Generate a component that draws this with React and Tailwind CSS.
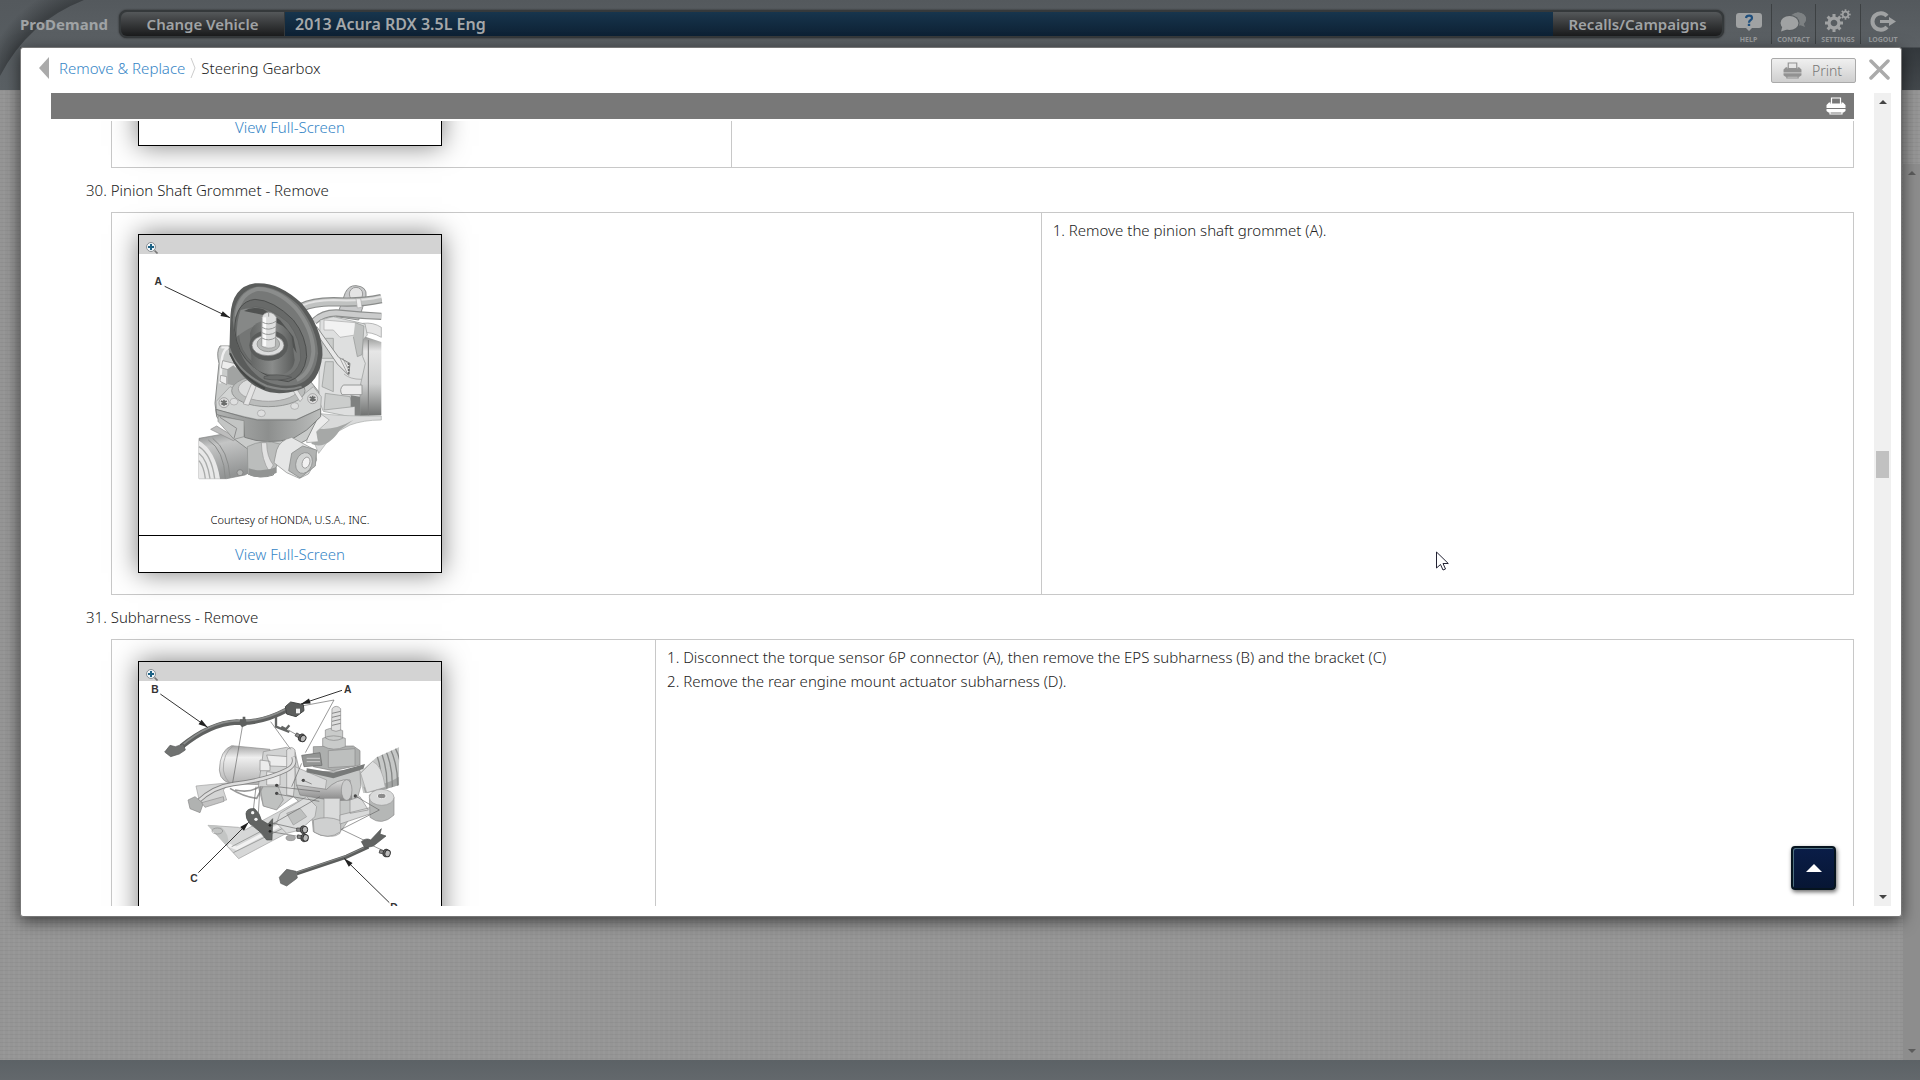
import React from "react";

const steps30 = ["Remove the pinion shaft grommet (A)."];
const steps31 = [
	"Disconnect the torque sensor 6P connector (A), then remove the EPS subharness (B) and the bracket (C)",
	"Remove the rear engine mount actuator subharness (D).",
];

function PrinterIcon({className}) {
	return (
		<svg viewBox="0 0 20 18" className={className} aria-hidden="true">
			<path d="M5.500 1h9v6h-9z" fill="none" stroke="currentColor" strokeWidth="1.200" />
			<path d="M3 5.500h1.600V7h10.800V5.500H17l2.500 2.500v3H.5V8z" fill="currentColor" />
			<path d="M.5 12h19v2L17.500 15.500h-15L.5 14z" fill="currentColor" />
			<path d="M4 14.500h12V17H4z" fill="none" stroke="currentColor" strokeWidth="1.200" />
		</svg>
	);
}

function MagnifierIcon() {
	return (
		<svg viewBox="0 0 12 12" className="size-3" aria-hidden="true">
			<path d="M8.500 8.500L11.500 11.500" stroke="#777" strokeWidth="1.600" />
			<circle cx="5" cy="5" r="4.500" fill="#f2f7fa" stroke="#8b8f92" />
			<path d="M5 2v6M2 5h6" stroke="#1d6285" strokeWidth="2" />
		</svg>
	);
}

function HelpIcon() {
	return (
		<svg viewBox="0 0 26 20" className="h-5 w-[26px]" aria-hidden="true">
			<path d="M3 1h20q3 0 3 3v9q0 3-3 3h-7l-3 3-3-3H3q-3 0-3-3V4q0-3 3-3z" fill="#a0a2a3" />
			<path d="M10 6q.4-2.300 3.200-2.300Q16 3.700 16 6q0 1.300-1.600 2.300-1.400.9-1.400 2.400" fill="none" stroke="#1f4f7d" strokeWidth="2.200" />
			<path d="M11.800 11.800h2.400V14h-2.400z" fill="#1f4f7d" />
		</svg>
	);
}

function ContactIcon() {
	return (
		<svg viewBox="0 0 27 20" className="h-5 w-[27px]" aria-hidden="true">
			<path d="M17 .5c5 0 9 2.700 9 6.500 0 2.200-1 3.700-2.200 4.700L25 15l-4.500-1.800-3.500.3z" fill="#7d8183" />
			<ellipse cx="18" cy="7" rx="8" ry="6.500" fill="#7d8183" />
			<ellipse cx="9.500" cy="11" rx="10" ry="8" fill="#565b5e" />
			<ellipse cx="9.500" cy="11" rx="9" ry="7" fill="#a0a2a3" />
			<path d="M2.500 14L1 19.500 7 17.500z" fill="#a0a2a3" />
		</svg>
	);
}

function Gear({cx, cy, r, width}) {
	const teeth = [0, 45, 90, 135, 180, 225, 270, 315];
	return (
		<g transform={`translate(${cx} ${cy})`} stroke="#a0a2a3" fill="none">
			<circle r={r * 0.55} strokeWidth={width} />
			{teeth.map((angle) => (
				<path key={angle} d={`M0 ${-r * 0.65}V${-r}`} strokeWidth={width * 0.95} transform={`rotate(${angle})`} />
			))}
		</g>
	);
}

function SettingsIcon() {
	return (
		<svg viewBox="0 0 26 23" className="h-[23px] w-[26px]" aria-hidden="true">
			<Gear cx={9} cy={14} r={9} width={3.2} />
			<Gear cx={20.5} cy={5.5} r={5.2} width={1.8} />
		</svg>
	);
}

function LogoutIcon() {
	return (
		<svg viewBox="0 0 26 21" className="h-[21px] w-[26px]" aria-hidden="true">
			<path d="M17 5A8.300 8.300 0 1 0 17 16" fill="none" stroke="#a0a2a3" strokeWidth="4" />
			<path d="M10 9h9V6l7 4.500-7 4.500v-3h-9z" fill="#a0a2a3" />
		</svg>
	);
}

function ToolButton({label, icon, divider}) {
	return (
		<button className={`flex h-10 flex-col items-center justify-end gap-1 ${divider ? "border-l border-[#3d4143]" : ""}`}>
			{icon}
			<span className="text-[7px] leading-[8px] font-bold text-[#999c9e]">{label}</span>
		</button>
	);
}

function TopBar() {
	return (
		<header className="relative flex h-[90px] items-start overflow-hidden bg-[linear-gradient(180deg,#54595d_0px,#5c6165_47px,#34393d_48px,#43484c_90px)]">
			<div className="absolute inset-y-0 left-0 w-5 bg-linear-to-b from-[#54595d] to-[#5a6064]"></div>
			<svg viewBox="0 0 90 90" className="absolute top-0 left-0 h-[90px] w-[90px]" aria-hidden="true">
				<defs>
					<radialGradient id="swoop" gradientUnits="userSpaceOnUse" cx="110" cy="110" r="170">
						<stop offset=".66" stopColor="#33373a" stopOpacity=".75" />
						<stop offset=".78" stopColor="#33373a" stopOpacity="0" />
					</radialGradient>
				</defs>
				<path d="M0 0H84Q28 22 0 76z" fill="url(#swoop)" />
			</svg>
			<div className="relative flex w-full items-start">
				<span className="mt-3 ml-5 w-[99px] text-[15px] leading-6 font-bold text-[#a0a3a5]">ProDemand</span>
				<nav className="mt-[10px] flex h-7 flex-1 overflow-hidden rounded-lg border-2 border-[#35393b] bg-[#35393b] shadow-[0_0_2px_#222]">
					<button className="w-[163px] bg-linear-to-b from-[#55585a] to-[#1b1c1d] text-[15px] leading-[22px] font-semibold text-[#a0a3a5]">Change Vehicle</button>
					<span className="ml-px flex-1 bg-linear-to-b from-[#17354d] to-[#0d2134] pl-[10px] text-[16px] leading-6 font-semibold text-[#a5a8aa]">
						2013 Acura RDX 3.5L Eng
					</span>
					<button className="w-[169px] bg-linear-to-b from-[#55585a] to-[#1b1c1d] text-[15px] leading-[22px] font-semibold text-[#a0a3a5]">
						Recalls/Campaigns
					</button>
				</nav>
				<div className="mt-1 mr-[15px] ml-[2px] grid grid-cols-[45px_44px_45px_45px]">
					<ToolButton label="HELP" icon={<HelpIcon />} />
					<ToolButton label="CONTACT" icon={<ContactIcon />} divider />
					<ToolButton label="SETTINGS" icon={<SettingsIcon />} divider />
					<ToolButton label="LOGOUT" icon={<LogoutIcon />} divider />
				</div>
			</div>
		</header>
	);
}

function Leader({from, to}) {
	const angle = (Math.atan2(to[1] - from[1], to[0] - from[0]) * 180) / Math.PI;
	return (
		<g>
			<path d={`M${from[0]} ${from[1]}L${to[0]} ${to[1]}`} stroke="#333" strokeWidth="3" />
			<path d="M0 0L-28 -8V8z" fill="#222" transform={`translate(${to[0]} ${to[1]}) rotate(${angle})`} />
		</g>
	);
}

function Callout({x, y, children}) {
	return (
		<text x={x} y={y} fontSize="31" fontWeight="700" fill="#333" textAnchor="middle" fontFamily="Liberation Sans, sans-serif">
			{children}
		</text>
	);
}

function GrommetDrawing() {
	return (
		<svg viewBox="57 102 906 843" className="h-[281px] w-[302px]" role="img" aria-label="Pinion shaft grommet">
			<defs>
				<linearGradient id="motor" x1="0" y1="0" x2="0" y2="1">
					<stop offset="0" stopColor="#8d8f8e" />
					<stop offset=".2" stopColor="#e6e6e6" />
					<stop offset=".6" stopColor="#cfd0d0" />
					<stop offset="1" stopColor="#6f7170" />
				</linearGradient>
				<linearGradient id="tube" x1="0" y1="0" x2=".3" y2="1">
					<stop offset="0" stopColor="#8e9090" />
					<stop offset=".3" stopColor="#c4c5c5" />
					<stop offset="1" stopColor="#929494" />
				</linearGradient>
				<linearGradient id="cup" x1="0" y1="0" x2="1" y2="0">
					<stop offset="0" stopColor="#636564" />
					<stop offset=".5" stopColor="#8a8c8b" />
					<stop offset="1" stopColor="#5a5c5b" />
				</linearGradient>
				<linearGradient id="flange" x1="0" y1="0" x2="1" y2="0">
					<stop offset="0" stopColor="#b1b3b2" />
					<stop offset=".5" stopColor="#8d8f8e" />
					<stop offset="1" stopColor="#bcbebd" />
				</linearGradient>
			</defs>

			{/* pipes and bracket behind the housing */}
			<path d="M650 290L676 218Q686 196 708 197Q742 200 738 228L728 262L716 300z" fill="#c9cacb" stroke="#8c8e8d" strokeWidth="3" />
			<circle cx="708" cy="222" r="20" fill="#e4e4e4" stroke="#999" strokeWidth="3" />
			<path d="M545 262Q575 246 640 245Q720 250 784 236" fill="none" stroke="#8a8c8b" strokeWidth="28" />
			<path d="M545 262Q575 246 640 245Q720 250 784 236" fill="none" stroke="#c0c2c1" strokeWidth="21" />
			<path d="M548 256Q580 241 640 240Q720 245 784 230" fill="none" stroke="#e2e2e2" strokeWidth="6" />
			<path d="M582 304Q610 278 650 279Q720 286 784 289" fill="none" stroke="#8c8e8d" strokeWidth="22" />
			<path d="M582 304Q610 278 650 279Q720 286 784 289" fill="none" stroke="#cbcccc" strokeWidth="15" />
			<path d="M708 236L722 236L726 262L712 264z" fill="#eee" stroke="#aaa" strokeWidth="2" />

			{/* motor */}
			<path d="M720 345L784 366V586L720 588z" fill="url(#motor)" />
			<path d="M745 360V586" stroke="#7c7e7d" strokeWidth="3" />
			<path d="M728 310Q760 306 784 322V352Q755 335 728 338z" fill="#e6e6e6" stroke="#9a9c9b" strokeWidth="2" />
			<path d="M600 300L640 290L735 312L742 345L728 360V410L736 430L720 500V586L700 592L610 574L596 540z" fill="#dedfdf" stroke="#939594" strokeWidth="2" />
			<path d="M612 300L706 308V345L660 352L640 330H612z" fill="#f2f2f2" stroke="#aaa" strokeWidth="2" />
			<path d="M706 308L732 318L726 404L712 410L700 350" fill="#bfc1c0" stroke="#939594" strokeWidth="2" />
			<path d="M606 355H640V415H606zM616 425H640V515L606 500zM616 520L690 530L700 560L612 570z" fill="#cbcdcc" stroke="#939594" strokeWidth="2" />
			<path d="M670 495H726V524H666Q656 508 670 495z" fill="#ebebeb" stroke="#989a99" strokeWidth="3" />
			<path d="M692 526L720 530V592L704 590V560H692z" fill="#7f8180" />
			<path d="M590 320L656 412L690 430L686 466L652 432L588 338z" fill="#e8e8e8" stroke="#8c8e8d" strokeWidth="3" />
			<path d="M660 415L684 464M668 414L688 454M676 422L690 438" stroke="#888" strokeWidth="2" />
			<path d="M686 430V464" stroke="#555" strokeWidth="5" strokeDasharray="4 5" />
			<path d="M672 462Q690 478 724 478" fill="none" stroke="#999" strokeWidth="2" />

			{/* lower brackets */}
			<path d="M590 580Q680 590 784 588V600Q730 600 690 615L640 642L596 700L575 650z" fill="#d9dada" stroke="#a8aaa9" strokeWidth="2" />
			<path d="M570 620Q630 640 700 600L660 630Q620 690 575 672z" fill="#a6a8a7" />
			<path d="M565 590L600 580L628 600L590 635L595 665L560 668z" fill="#ececec" stroke="#9c9e9d" strokeWidth="2" />

			{/* steering tube */}
			<path d="M237 655L310 642L395 655L410 745L375 765L320 776H237z" fill="url(#tube)" stroke="#858786" strokeWidth="2" />
			<path d="M237 662Q286 690 300 776H237z" fill="#e8e8e8" />
			<path d="M237 680Q275 705 284 776M237 700Q262 720 270 776M237 722Q252 740 256 776" fill="none" stroke="#aaacab" strokeWidth="4" />
			<path d="M265 660Q312 690 316 776M278 655Q325 690 330 772" fill="none" stroke="#8a8c8b" strokeWidth="3" />
			<circle cx="360" cy="758" r="9" fill="#b5b7b6" stroke="#777" strokeWidth="2" />
			<path d="M272 628L290 618L350 655L340 662z" fill="#bdbdbd" stroke="#8a8a8a" strokeWidth="2" />

			{/* pinion housing */}
			<path d="M300 378H400L560 470L596 515L600 580L560 660L480 700L460 765Q420 778 384 762L400 700L340 655L290 590L285 550L297 430Q288 395 300 378z" fill="#c9cbca" stroke="#8a8c8b" strokeWidth="3" />
			<path d="M304 382H325Q304 392 304 440L300 490" fill="none" stroke="#f0f0f0" strokeWidth="7" />
			<path d="M308 422L350 432V455L304 444zM302 466L320 470V494L300 484z" fill="#ededed" stroke="#8c8c8c" strokeWidth="2" />
			<path d="M322 448L340 436L376 470L360 500L322 492z" fill="#a1a3a2" />
			<path d="M288 545L330 500L430 545L520 548L580 500L604 530L602 566L552 588L530 598H410L374 590L290 570z" fill="#d3d5d4" stroke="#979998" strokeWidth="2" />
			<ellipse cx="445" cy="512" rx="110" ry="48" fill="#bbbdbc" stroke="#939594" strokeWidth="3" />
			<ellipse cx="445" cy="506" rx="90" ry="38" fill="#dcdddd" stroke="#a5a5a5" strokeWidth="3" />
			<path d="M395 490L370 552L386 556L408 500zM515 505L540 545L548 535L526 500z" fill="#e4e4e4" stroke="#999" strokeWidth="2" />
			<path d="M288 568L374 592L412 600H528L602 566V590L560 630L520 655Q440 676 374 652L370 604L290 584z" fill="url(#flange)" stroke="#7d7f7e" strokeWidth="3" />
			<path d="M294 588L372 602V650L342 658L294 604z" fill="#c3c5c4" stroke="#868887" strokeWidth="2" />
			<path d="M300 592L350 625L342 655" fill="none" stroke="#8c8c8c" strokeWidth="3" />
			{[[312, 548], [578, 536]].map(([x, y]) => (
				<g key={x}>
					<circle cx={x} cy={y} r="15" fill="#dcdcdc" stroke="#8c8c8c" strokeWidth="2" />
					<path d={`M${x - 9} ${y - 5}L${x + 9} ${y + 5}M${x - 8} ${y + 5}L${x + 8} ${y - 5}M${x} ${y - 9}V${y + 9}`} stroke="#6a6c6b" strokeWidth="5" />
				</g>
			))}
			{[[342, 545], [424, 580], [524, 558]].map(([x, y]) => (
				<ellipse key={x} cx={x} cy={y} rx="12" ry="10" fill="#dedfdf" stroke="#a0a0a0" strokeWidth="2" />
			))}

			{/* lower boss and plug */}
			<path d="M382 680Q430 655 480 672L470 740Q430 780 384 762z" fill="#bbbdbc" stroke="#8d8f8e" strokeWidth="2" />
			<path d="M424 668L440 668Q440 710 460 735L448 755Q425 720 424 668z" fill="#e2e2e2" stroke="#999" strokeWidth="2" />
			<path d="M386 745Q425 758 470 742V758Q425 782 386 764z" fill="#929493" />
			<path d="M470 690Q480 660 515 652L585 690L590 720L565 762L538 775L500 758L462 728z" fill="#e5e6e6" stroke="#868887" strokeWidth="2" />
			<path d="M515 700L548 678L590 690L586 738L540 774L506 752z" fill="#b1b3b2" stroke="#7c7e7d" strokeWidth="2" />
			<ellipse cx="552" cy="729" rx="24" ry="32" fill="#d2d4d3" stroke="#868887" strokeWidth="2" transform="rotate(20 552 729)" />
			<ellipse cx="558" cy="728" rx="11" ry="17" fill="#f2f2f2" stroke="#888" strokeWidth="2" transform="rotate(20 558 728)" />

			{/* grommet */}
			<path d="M331 290Q335 200 405 190Q475 184 545 250Q608 325 607 405Q600 490 535 510Q470 530 425 508Q360 480 328 400z" fill="#5a5c5b" />
			<path d="M338 300Q345 212 410 200Q470 196 535 255Q592 325 594 400Q586 480 530 494Q480 505 430 480Q350 430 338 300z" fill="#767877" />
			<path d="M350 290Q355 222 412 207Q470 206 525 262Q578 325 580 395Q574 460 530 480" fill="none" stroke="#8b8d8c" strokeWidth="12" />
			<path d="M344 330Q345 245 405 238Q460 240 520 300Q560 350 560 410Q552 470 505 485Q450 480 400 440Q350 400 344 330z" fill="#686a69" stroke="#4c4e4d" strokeWidth="3" />
			<path d="M354 335Q352 270 405 260Q450 262 505 308Q545 360 542 420Q530 462 495 470Q445 468 400 430Q358 395 354 335z" fill="#747675" stroke="#636564" strokeWidth="3" />
			<path d="M362 270Q400 255 440 280L425 310Q390 320 350 350Q350 300 362 270z" fill="#868887" />
			<path d="M372 273Q395 258 430 268L480 300L520 350L530 400L500 350L430 285z" fill="#505251" />
			<path d="M390 340Q400 302 445 300Q495 310 515 350L524 420Q520 460 475 465Q420 465 395 435Z" fill="url(#cup)" />
			<ellipse cx="446" cy="376" rx="58" ry="46" fill="#5a5c5b" />
			<ellipse cx="444" cy="376" rx="48" ry="31" fill="#dcdddd" stroke="#777" strokeWidth="2" />
			<ellipse cx="445" cy="372" rx="34" ry="23" fill="#b6b8b7" stroke="#868887" strokeWidth="2" />
			<path d="M426 292Q430 278 446 277Q462 278 469 292L466 380Q445 390 424 378z" fill="#dedfdf" stroke="#8c8c8c" strokeWidth="2" />
			<path d="M434 292V378" stroke="#fafafa" strokeWidth="9" />
			<path d="M426 306Q446 318 468 304M426 322Q446 334 468 320M426 338Q446 350 468 336M426 354Q446 366 468 352M446 278V290" fill="none" stroke="#989a99" strokeWidth="3" />
			<path d="M328 385Q350 455 440 498Q500 516 545 500" fill="none" stroke="#838584" strokeWidth="6" />
			<path d="M330 400Q358 468 435 506" fill="none" stroke="#454746" strokeWidth="6" />
			<path d="M432 470Q470 458 515 472Q480 486 432 476z" fill="#6a6c6b" stroke="#505251" strokeWidth="2" />

			<Leader from={[134, 199]} to={[330, 293]} />
			<Callout x={115} y={194}>A</Callout>
		</svg>
	);
}

function Bolt({x, y, angle = 0}) {
	return (
		<g transform={`translate(${x} ${y}) rotate(${angle})`}>
			<path d="M-20 -5H0V5H-20z" fill="#8a8a8a" stroke="#333" strokeWidth="2" />
			<ellipse rx="9" ry="12" fill="#666" stroke="#222" strokeWidth="2" />
			<ellipse cx="5" rx="8" ry="10" fill="#bbb" stroke="#333" strokeWidth="3" />
		</g>
	);
}

function SubharnessDrawing() {
	return (
		<svg viewBox="57 243 906 843" className="h-[281px] w-[302px]" role="img" aria-label="Subharness">
			<defs>
				<linearGradient id="can" x1="0" y1="0" x2="0" y2="1">
					<stop offset="0" stopColor="#a5a5a5" />
					<stop offset=".3" stopColor="#efefef" />
					<stop offset="1" stopColor="#b0b0b0" />
				</linearGradient>
				<linearGradient id="barrel" x1="0" y1="0" x2="0" y2="1">
					<stop offset="0" stopColor="#dcdcdc" />
					<stop offset="1" stopColor="#868686" />
				</linearGradient>
				<clipPath id="bellows">
					<path d="M715 520L770 472L838 441V555L780 572L730 580z" />
				</clipPath>
			</defs>

			{/* rack tube and mounting base */}
			<path d="M264 676L355 682L375 690L560 590L612 600V640L356 776z" fill="#d6d7d7" stroke="#a0a0a0" strokeWidth="2" />
			<path d="M264 676L300 678Q330 700 325 740z" fill="#c3c5c4" />
			<path d="M325 735L350 745L600 612" fill="none" stroke="#f2f2f2" strokeWidth="10" />
			<path d="M340 758L610 625M335 740L480 664" fill="none" stroke="#9c9e9d" strokeWidth="3" />
			<ellipse cx="292" cy="693" rx="16" ry="9" fill="none" stroke="#8c8c8c" strokeWidth="2" />

			{/* bellows */}
			<g clipPath="url(#bellows)">
				<path d="M700 430H838V600H700z" fill="#c6c8c7" />
				<path d="M730 560Q790 560 838 530V560L740 590z" fill="#a3a5a4" />
				{[768, 784, 800, 816, 832].map((x) => (
					<path key={x} d={`M${x - 8} 440Q${x + 22} 500 ${x + 16} 580`} fill="none" stroke="#858786" strokeWidth="4" />
				))}
			</g>
			<path d="M722 520L758 484Q786 495 796 562L740 578z" fill="#dedfdf" stroke="#a0a0a0" strokeWidth="2" />

			{/* motor */}
			<path d="M335 437L450 448V555L360 552Q300 555 298 510Q300 450 335 437z" fill="url(#can)" stroke="#8c8c8c" strokeWidth="2" />
			<path d="M340 438Q308 460 310 510Q315 540 335 552" fill="none" stroke="#999" strokeWidth="2" />
			<path d="M430 455L500 442L525 455L545 540L520 590L470 628L430 618L415 560z" fill="#d2d3d3" stroke="#8c8c8c" strokeWidth="2" />
			<path d="M440 465L505 470V500L450 498zM420 480L450 484V512H420zM440 515L480 520V555H440z" fill="#ececec" stroke="#8c8c8c" strokeWidth="2" />
			<path d="M500 450Q515 435 525 450V590L500 585z" fill="#e0e0e0" stroke="#8c8c8c" strokeWidth="2" />
			<path d="M420 560L475 560L490 600L470 630L430 618z" fill="#bfc1c0" stroke="#8c8c8c" strokeWidth="2" />

			{/* gearbox housing */}
			<path d="M525 540L560 512L600 515L720 510L722 560L700 640L665 690Q625 725 580 695L575 640L520 590z" fill="#c6c8c7" stroke="#8c8c8c" strokeWidth="2" />
			<path d="M525 500L560 515L620 540L615 572L530 558z" fill="#d9dada" stroke="#999" strokeWidth="2" />
			<path d="M530 555L620 568Q650 535 690 540L696 600L640 602L540 585z" fill="url(#barrel)" stroke="#808080" strokeWidth="2" />
			<ellipse cx="680" cy="570" rx="16" ry="31" fill="#cbcccc" stroke="#8c8c8c" strokeWidth="2" />
			<path d="M612 595H660V700Q635 718 612 700z" fill="#dadbdb" stroke="#939393" strokeWidth="2" />
			<path d="M580 660Q620 645 662 662V695Q625 722 582 696z" fill="#cfd0d0" stroke="#8c8c8c" strokeWidth="2" />
			<path d="M660 645L770 618L785 630L660 672zM690 600L720 590L745 630L690 640z" fill="#d9dada" stroke="#8c8c8c" strokeWidth="2" />
			<path d="M748 585Q785 560 822 592V645Q785 680 750 652z" fill="#b5b7b6" stroke="#8c8c8c" strokeWidth="2" />
			<ellipse cx="785" cy="592" rx="37" ry="24" fill="#d9dada" stroke="#999" strokeWidth="2" />
			<ellipse cx="785" cy="588" rx="13" ry="8" fill="#8c8c8c" stroke="#eee" strokeWidth="3" />

			{/* sensor block and pinion */}
			<path d="M560 505L640 518L735 492L730 507L640 535L560 517z" fill="#787a79" />
			<path d="M580 440L700 438L720 452V495L640 512L580 500z" fill="#adafae" stroke="#808080" strokeWidth="2" />
			<path d="M625 452L705 446V498L625 503z" fill="#bdbfbe" stroke="#8c8c8c" strokeWidth="2" />
			<path d="M545 466L600 458L606 496L552 500z" fill="#939594" stroke="#666" strokeWidth="2" />
			<path d="M560 475H600M560 485H600" stroke="#ccc" strokeWidth="3" />
			<path d="M608 415Q640 400 676 415V440Q640 456 608 438zM616 390Q640 378 668 392V415Q640 428 616 414z" fill="#c9cbca" stroke="#868686" strokeWidth="2" />
			<path d="M636 326Q648 312 662 326V390Q648 398 634 390z" fill="#dedede" stroke="#868686" strokeWidth="2" />
			<path d="M636 340L662 334M636 352L662 346M636 364L662 358M636 376L662 370" stroke="#888" strokeWidth="3" />

			{/* front casting */}
			<path d="M480 640L560 590L590 620L585 650L540 690L500 700L470 670z" fill="#dbdcdc" stroke="#969696" strokeWidth="2" />
			<path d="M500 640L540 625L560 650L520 675z" fill="#bec0bf" stroke="#999" strokeWidth="2" />

			{/* motor cable and connector */}
			<path d="M228 558L330 548L310 570L320 600L240 612z" fill="#d4d5d5" stroke="#a0a0a0" strokeWidth="2" />
			<path d="M232 606Q280 560 340 552Q440 540 500 510Q530 495 520 470" fill="none" stroke="#868686" strokeWidth="13" />
			<path d="M232 606Q280 560 340 552Q440 540 500 510Q530 495 520 470" fill="none" stroke="#ddd" strokeWidth="8" />
			<path d="M330 565Q370 590 410 595L428 560M345 570Q390 580 418 560" fill="none" stroke="#999" strokeWidth="5" />
			<path d="M204 600L225 590L250 610L240 638L210 626z" fill="#b0b2b1" stroke="#868686" strokeWidth="2" />
			<path d="M245 608L310 590L312 604L255 622z" fill="#c3c3c3" stroke="#8c8c8c" strokeWidth="2" />
			{[[470, 556], [470, 580], [550, 541], [706, 588]].map(([x, y]) => (
				<circle key={`${x}-${y}`} cx={x} cy={y} r="5" fill="#444" />
			))}

			{/* assembly lines */}
			<path
				d="M368 375L338 548M545 318L642 300L556 458M452 365L512 448M408 560L400 630M420 560L415 640M470 560L600 575M470 582L598 604M452 675L600 590M452 668L540 688M452 695L540 710M550 541L575 552M706 588L778 630L664 688L735 722M505 390L540 410M760 738L790 752M545 490L515 560"
				fill="none"
				stroke="#666"
				strokeWidth="2"
			/>

			{/* EPS subharness */}
			<path d="M184 440Q270 370 350 366Q420 372 500 330" fill="none" stroke="#5f6160" strokeWidth="16" />
			<path d="M186 436Q270 366 350 362Q420 368 498 327" fill="none" stroke="#8a8c8b" strokeWidth="5" />
			<path d="M134 456L150 436L166 440L190 432L196 450L178 462L152 470z" fill="#707271" stroke="#565857" strokeWidth="2" />
			<path d="M496 320L512 306L550 314L552 332L528 350L500 342z" fill="#5c5e5d" stroke="#454746" strokeWidth="3" />
			<path d="M528 326H540V340H528z" fill="#f2f2f2" />
			<path d="M360 358H378L380 376L366 382L358 372zM368 350H376V362H368z" fill="#5e605f" />
			<path d="M468 350V380L508 396M484 380L498 388L508 376" fill="none" stroke="#636564" strokeWidth="7" />
			<Bolt x={545} y={413} angle={30} />

			{/* bracket */}
			<path d="M378 640Q380 624 404 626Q420 640 424 660L444 672L458 656L456 720H440Q420 690 390 672Q376 655 378 640z" fill="#626463" stroke="#4c4e4d" strokeWidth="2" />
			<circle cx="398" cy="638" r="5" fill="#f5f5f5" />
			<circle cx="408" cy="658" r="5" fill="#f5f5f5" />
			<circle cx="450" cy="676" r="4" fill="#222" />
			<circle cx="450" cy="694" r="4" fill="#222" />
			<Bolt x={550} y={689} />
			<Bolt x={552} y={713} angle={10} />
			<ellipse cx="512" cy="714" rx="14" ry="8" fill="#aaa" stroke="#8c8c8c" strokeWidth="2" />

			{/* mount actuator subharness */}
			<path d="M530 820L680 770L745 740" fill="none" stroke="#5c5e5d" strokeWidth="12" />
			<path d="M530 817L680 767L745 737" fill="none" stroke="#868887" strokeWidth="3" />
			<path d="M478 832L500 808L528 814L532 834L500 858L482 850z" fill="#707271" stroke="#565857" strokeWidth="2" />
			<path d="M724 725Q738 712 752 720L784 686L780 702L798 708L760 738L735 744z" fill="#626463" stroke="#4c4e4d" strokeWidth="2" />
			<Bolt x={798} y={759} angle={15} />

			<Leader from={[666, 271]} to={[543, 312]} />
			<Leader from={[121, 282]} to={[263, 382]} />
			<Leader from={[235, 818]} to={[386, 667]} />
			<Leader from={[808, 908]} to={[672, 775]} />
			<Callout x={683} y={279}>A</Callout>
			<Callout x={105} y={279}>B</Callout>
			<Callout x={222} y={847}>C</Callout>
			<Callout x={822} y={932}>D</Callout>
		</svg>
	);
}

function FullScreenLink() {
	return (
		<div className="flex h-9 items-center justify-center">
			<a href="#full-screen" className="leading-6 text-[#3585c6]">
				View Full-Screen
			</a>
		</div>
	);
}

function FigureCard({children}) {
	return (
		<figure className="w-[304px] border border-black bg-white shadow-[0_0_25px_rgba(0,0,0,0.5)]">
			<div className="flex h-[19px] items-end bg-[#d3d3d3] pl-[7px]">
				<MagnifierIcon />
			</div>
			<div className="relative border-b border-black">
				{children}
				<figcaption className="absolute inset-x-0 bottom-[7px] text-center text-[11px] leading-4 font-light text-black">Courtesy of HONDA, U.S.A., INC.</figcaption>
			</div>
			<FullScreenLink />
		</figure>
	);
}

function StepTable({figure, steps, figureWidth}) {
	return (
		<table className="w-full table-fixed border-separate border-spacing-0 border border-[#c8c8c8]">
			<tbody>
				<tr>
					<td className={`border-r border-[#c8c8c8] pb-[21px] pl-[26px] align-top ${figureWidth}`}>{figure}</td>
					<td className="pt-[5px] pl-[11px] align-top">
						<ol>
							{steps.map((step, index) => (
								<li key={step} className="leading-6">
									{index + 1}. {step}
								</li>
							))}
						</ol>
					</td>
				</tr>
			</tbody>
		</table>
	);
}

function ProcedureTitle({number, children}) {
	return (
		<h3 className="-ml-[25px] flex h-11 items-center leading-6 font-[350]">
			{number}. {children}
		</h3>
	);
}

function ScrollRail({thumb, className}) {
	return (
		<div className={`flex w-[17px] shrink-0 flex-col items-center justify-between ${className}`}>
			<div className="mt-[7px] border-x-4 border-b-4 border-x-transparent border-b-current"></div>
			{thumb}
			<div className="mb-[7px] border-x-4 border-t-4 border-x-transparent border-t-current"></div>
		</div>
	);
}

function ArticleModal() {
	return (
		<section className="absolute top-[47px] right-[18px] bottom-[163px] left-5 flex flex-col rounded-[3px] border border-[#777] bg-white pb-[10px] text-[15px] font-[350] text-[#222] shadow-[0_4px_16px_rgba(0,0,0,0.6)]">
			<div className="flex h-[45px] shrink-0 items-start pr-[11px] pl-[18px]">
				<div className="mt-2 flex h-6 flex-1 items-center">
					<button aria-label="Back" className="border-y-11 border-r-10 border-y-transparent border-r-[#aaa]"></button>
					<a href="#remove-replace" className="ml-[10px] text-[#3585c6]">
						Remove &amp; Replace
					</a>
					<svg viewBox="0 0 6 20" className="mx-[5px] h-5 w-[6px]" aria-hidden="true">
						<path d="M1 0L5 10L1 20" fill="none" stroke="#ccc" />
					</svg>
					<span>Steering Gearbox</span>
				</div>
				<button className="mt-[10px] mr-[13px] flex h-[25px] w-[85px] items-center gap-[10px] rounded-[2px] border border-[#aaa] bg-linear-to-b from-[#f0f0f0] to-[#cfcfcf] pl-[11px] text-[14px] text-[#777]">
					<PrinterIcon className="h-[17px] w-[19px] text-[#929292]" />
					Print
				</button>
				<button aria-label="Close" className="mt-[11px]">
					<svg viewBox="0 0 21 21" className="size-[21px]" aria-hidden="true">
						<path d="M2 2L19 19M19 2L2 19" stroke="#aaa" strokeWidth="3.500" strokeLinecap="round" />
					</svg>
				</button>
			</div>

			<div className="flex min-h-0 flex-1 gap-5 pr-[10px] pl-[30px]">
				<div className="flex min-w-0 flex-1 flex-col">
					<div className="mb-[2px] flex h-[26px] shrink-0 items-center justify-end bg-[#787878] pr-2">
						<button aria-label="Print article">
							<PrinterIcon className="h-[18px] w-5 text-white" />
						</button>
					</div>
					<div className="min-h-0 flex-1 overflow-hidden pl-15">
						{/* tail of the previous step, scrolled out at the top */}
						<div className="-mt-18">
							<StepTable
								figureWidth="w-[35.6%]"
								steps={[]}
								figure={
									<div className="w-[304px] border border-t-0 border-black pt-[59px] shadow-[0_0_25px_rgba(0,0,0,0.5)]">
										<FullScreenLink />
									</div>
								}
							/>
						</div>
						<ProcedureTitle number={30}>Pinion Shaft Grommet - Remove</ProcedureTitle>
						<StepTable figureWidth="w-[53.4%] pt-[21px]" figure={<FigureCard><GrommetDrawing /></FigureCard>} steps={steps30} />
						<ProcedureTitle number={31}>Subharness - Remove</ProcedureTitle>
						<StepTable figureWidth="w-[31.25%] pt-[21px]" figure={<FigureCard><SubharnessDrawing /></FigureCard>} steps={steps31} />
					</div>
				</div>
				<ScrollRail className="relative bg-[#f0f0f0] text-[#444]" thumb={<div className="absolute top-[44%] h-[27px] w-[13px] bg-[#c1c1c1]"></div>} />
			</div>

			<button
				aria-label="Back to top"
				className="absolute right-[65px] bottom-[26px] flex h-11 w-[45px] items-center justify-center rounded-[4px] border-2 border-[#06141f] bg-linear-to-b from-[#0a1d48] to-[#071634] shadow-[1px_2px_4px_rgba(0,0,0,0.6),inset_1px_1px_0_#4d6f80]">
				<span className="border-x-8 border-b-8 border-x-transparent border-b-white"></span>
			</button>
		</section>
	);
}

function MouseCursor() {
	return (
		<svg viewBox="0 0 13 20" className="absolute top-[51%] left-[74.8%] h-5 w-[13px]" aria-hidden="true">
			<path d="M.5 1v16l4-3.500 2.500 5.500 2.500-1-2.500-5.500h5.300z" fill="#fff" stroke="#223" />
		</svg>
	);
}

function App() {
	return (
		<div className="relative flex h-screen flex-col overflow-hidden bg-[#969696] font-['Noto_Sans',sans-serif]">
			<TopBar />
			<div className="flex min-h-0 flex-1 bg-[repeating-linear-gradient(90deg,rgba(0,0,0,0.02)_0px,rgba(0,0,0,0.02)_3px,transparent_3px,transparent_5px),repeating-linear-gradient(180deg,#929292_0px,#929292_1px,#989898_1px,#989898_4px)]">
				<div className="flex-1"></div>
				<ScrollRail className="mt-[74px] bg-[#8d8d8d] text-[#5c5c5c]" />
			</div>
			<footer className="h-5 shrink-0 bg-linear-to-b from-[#5c6266] to-[#63686c]"></footer>
			<ArticleModal />
			<MouseCursor />
		</div>
	);
}

export default App;
